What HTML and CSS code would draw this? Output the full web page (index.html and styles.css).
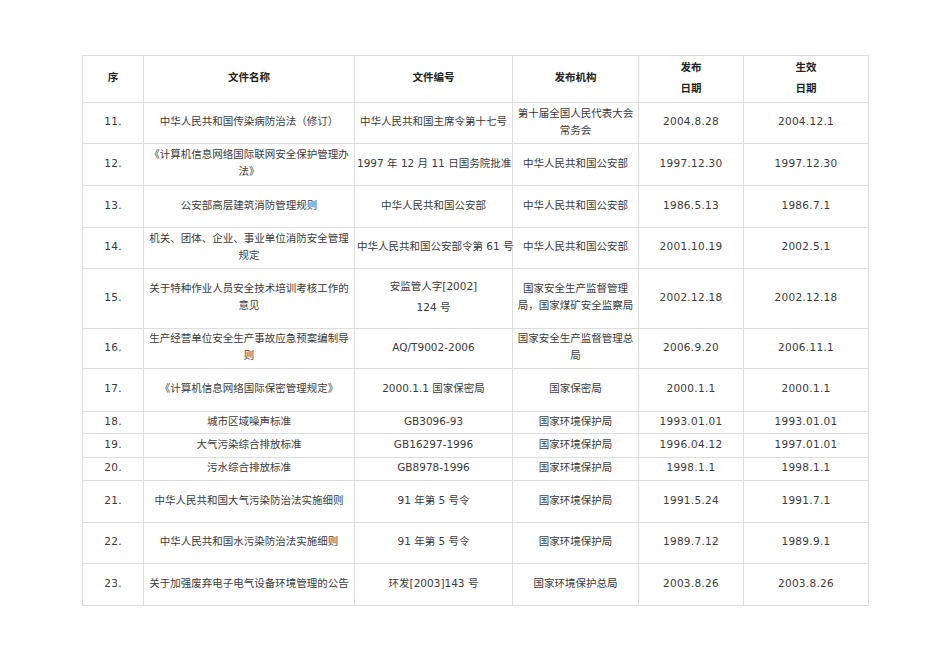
FILE: index.html
```html
<!DOCTYPE html>
<html lang="zh-CN">
<head>
<meta charset="utf-8">
<title>法规列表</title>
<link rel="stylesheet" href="styles.css">
</head>
<body>
<div class="page">
<table class="doc">
<colgroup>
<col class="c1"><col class="c2"><col class="c3"><col class="c4"><col class="c5"><col class="c6">
</colgroup>
<thead>
<tr class="h47">
<th>序</th><th>文件名称</th><th>文件编号</th><th>发布机构</th>
<th><div class="p">发布</div><div class="p">日期</div></th>
<th><div class="p">生效</div><div class="p">日期</div></th>
</tr>
</thead>
<tbody>
<tr class="h41"><td class="num">11.</td><td>中华人民共和国传染病防治法（修订）</td><td>中华人民共和国主席令第十七号</td><td>第十届全国人民代表大会<br>常务会</td><td class="num">2004.8.28</td><td class="num">2004.12.1</td></tr>
<tr class="h42"><td class="num">12.</td><td>《计算机信息网络国际联网安全保护管理办<br>法》</td><td class="nw">1997 年 12 月 11 日国务院批准</td><td>中华人民共和国公安部</td><td class="num">1997.12.30</td><td class="num">1997.12.30</td></tr>
<tr class="h42"><td class="num">13.</td><td>公安部高层建筑消防管理规则</td><td>中华人民共和国公安部</td><td>中华人民共和国公安部</td><td class="num">1986.5.13</td><td class="num">1986.7.1</td></tr>
<tr class="h41"><td class="num">14.</td><td>机关、团体、企业、事业单位消防安全管理<br>规定</td><td class="nw">中华人民共和国公安部令第 61 号</td><td>中华人民共和国公安部</td><td class="num">2001.10.19</td><td class="num">2002.5.1</td></tr>
<tr class="h60"><td class="num">15.</td><td>关于特种作业人员安全技术培训考核工作的<br>意见</td><td><div class="p">安监管人字[2002]</div><div class="p">124 号</div></td><td>国家安全生产监督管理<br>局，国家煤矿安全监察局</td><td class="num">2002.12.18</td><td class="num">2002.12.18</td></tr>
<tr class="h40"><td class="num">16.</td><td>生产经营单位安全生产事故应急预案编制导<br>则</td><td>AQ/T9002-2006</td><td>国家安全生产监督管理总<br>局</td><td class="num">2006.9.20</td><td class="num">2006.11.1</td></tr>
<tr class="h43"><td class="num">17.</td><td>《计算机信息网络国际保密管理规定》</td><td>2000.1.1 国家保密局</td><td>国家保密局</td><td class="num">2000.1.1</td><td class="num">2000.1.1</td></tr>
<tr class="h22"><td class="num">18.</td><td>城市区域噪声标准</td><td>GB3096-93</td><td>国家环境保护局</td><td class="num">1993.01.01</td><td class="num">1993.01.01</td></tr>
<tr class="h24"><td class="num">19.</td><td>大气污染综合排放标准</td><td>GB16297-1996</td><td>国家环境保护局</td><td class="num">1996.04.12</td><td class="num">1997.01.01</td></tr>
<tr class="h23"><td class="num">20.</td><td>污水综合排放标准</td><td>GB8978-1996</td><td>国家环境保护局</td><td class="num">1998.1.1</td><td class="num">1998.1.1</td></tr>
<tr class="h42"><td class="num">21.</td><td>中华人民共和国大气污染防治法实施细则</td><td>91 年第 5 号令</td><td>国家环境保护局</td><td class="num">1991.5.24</td><td class="num">1991.7.1</td></tr>
<tr class="h41"><td class="num">22.</td><td>中华人民共和国水污染防治法实施细则</td><td>91 年第 5 号令</td><td>国家环境保护局</td><td class="num">1989.7.12</td><td class="num">1989.9.1</td></tr>
<tr class="h42"><td class="num">23.</td><td>关于加强废弃电子电气设备环境管理的公告</td><td>环发[2003]143 号</td><td>国家环境保护总局</td><td class="num">2003.8.26</td><td class="num">2003.8.26</td></tr>
</tbody>
</table>
</div>
</body>
</html>
```
FILE: styles.css
```css
html, body {
  margin: 0;
  padding: 0;
  background: #ffffff;
}

body {
  font-family: "DejaVu Sans", "Noto Sans CJK SC", sans-serif;
  font-size: 10.5px;
  color: #3a3a3a;
}

.page {
  padding: 55px 0 0 82px;
}

.doc {
  border-collapse: collapse;
  table-layout: fixed;
  width: 787px;
}

.c1 { width: 61px; }
.c2 { width: 211px; }
.c3 { width: 158px; }
.c4 { width: 126px; }
.c5 { width: 105px; }
.c6 { width: 125px; }

.doc th,
.doc td {
  border: 1px solid #dedede;
  text-align: center;
  vertical-align: middle;
  padding: 0 2px 3px;
  line-height: 17px;
}

.doc th {
  font-weight: bold;
  color: #222222;
}

.doc td.num {
  letter-spacing: 0.3px;
}

.p {
  line-height: 21px;
}

.nw {
  white-space: nowrap;
}

.h22 { height: 22px; }
.h23 { height: 23px; }
.h24 { height: 24px; }
.h40 { height: 40px; }
.h41 { height: 41px; }
.h42 { height: 42px; }
.h43 { height: 43px; }
.h47 { height: 47px; }
.h60 { height: 60px; }
```
